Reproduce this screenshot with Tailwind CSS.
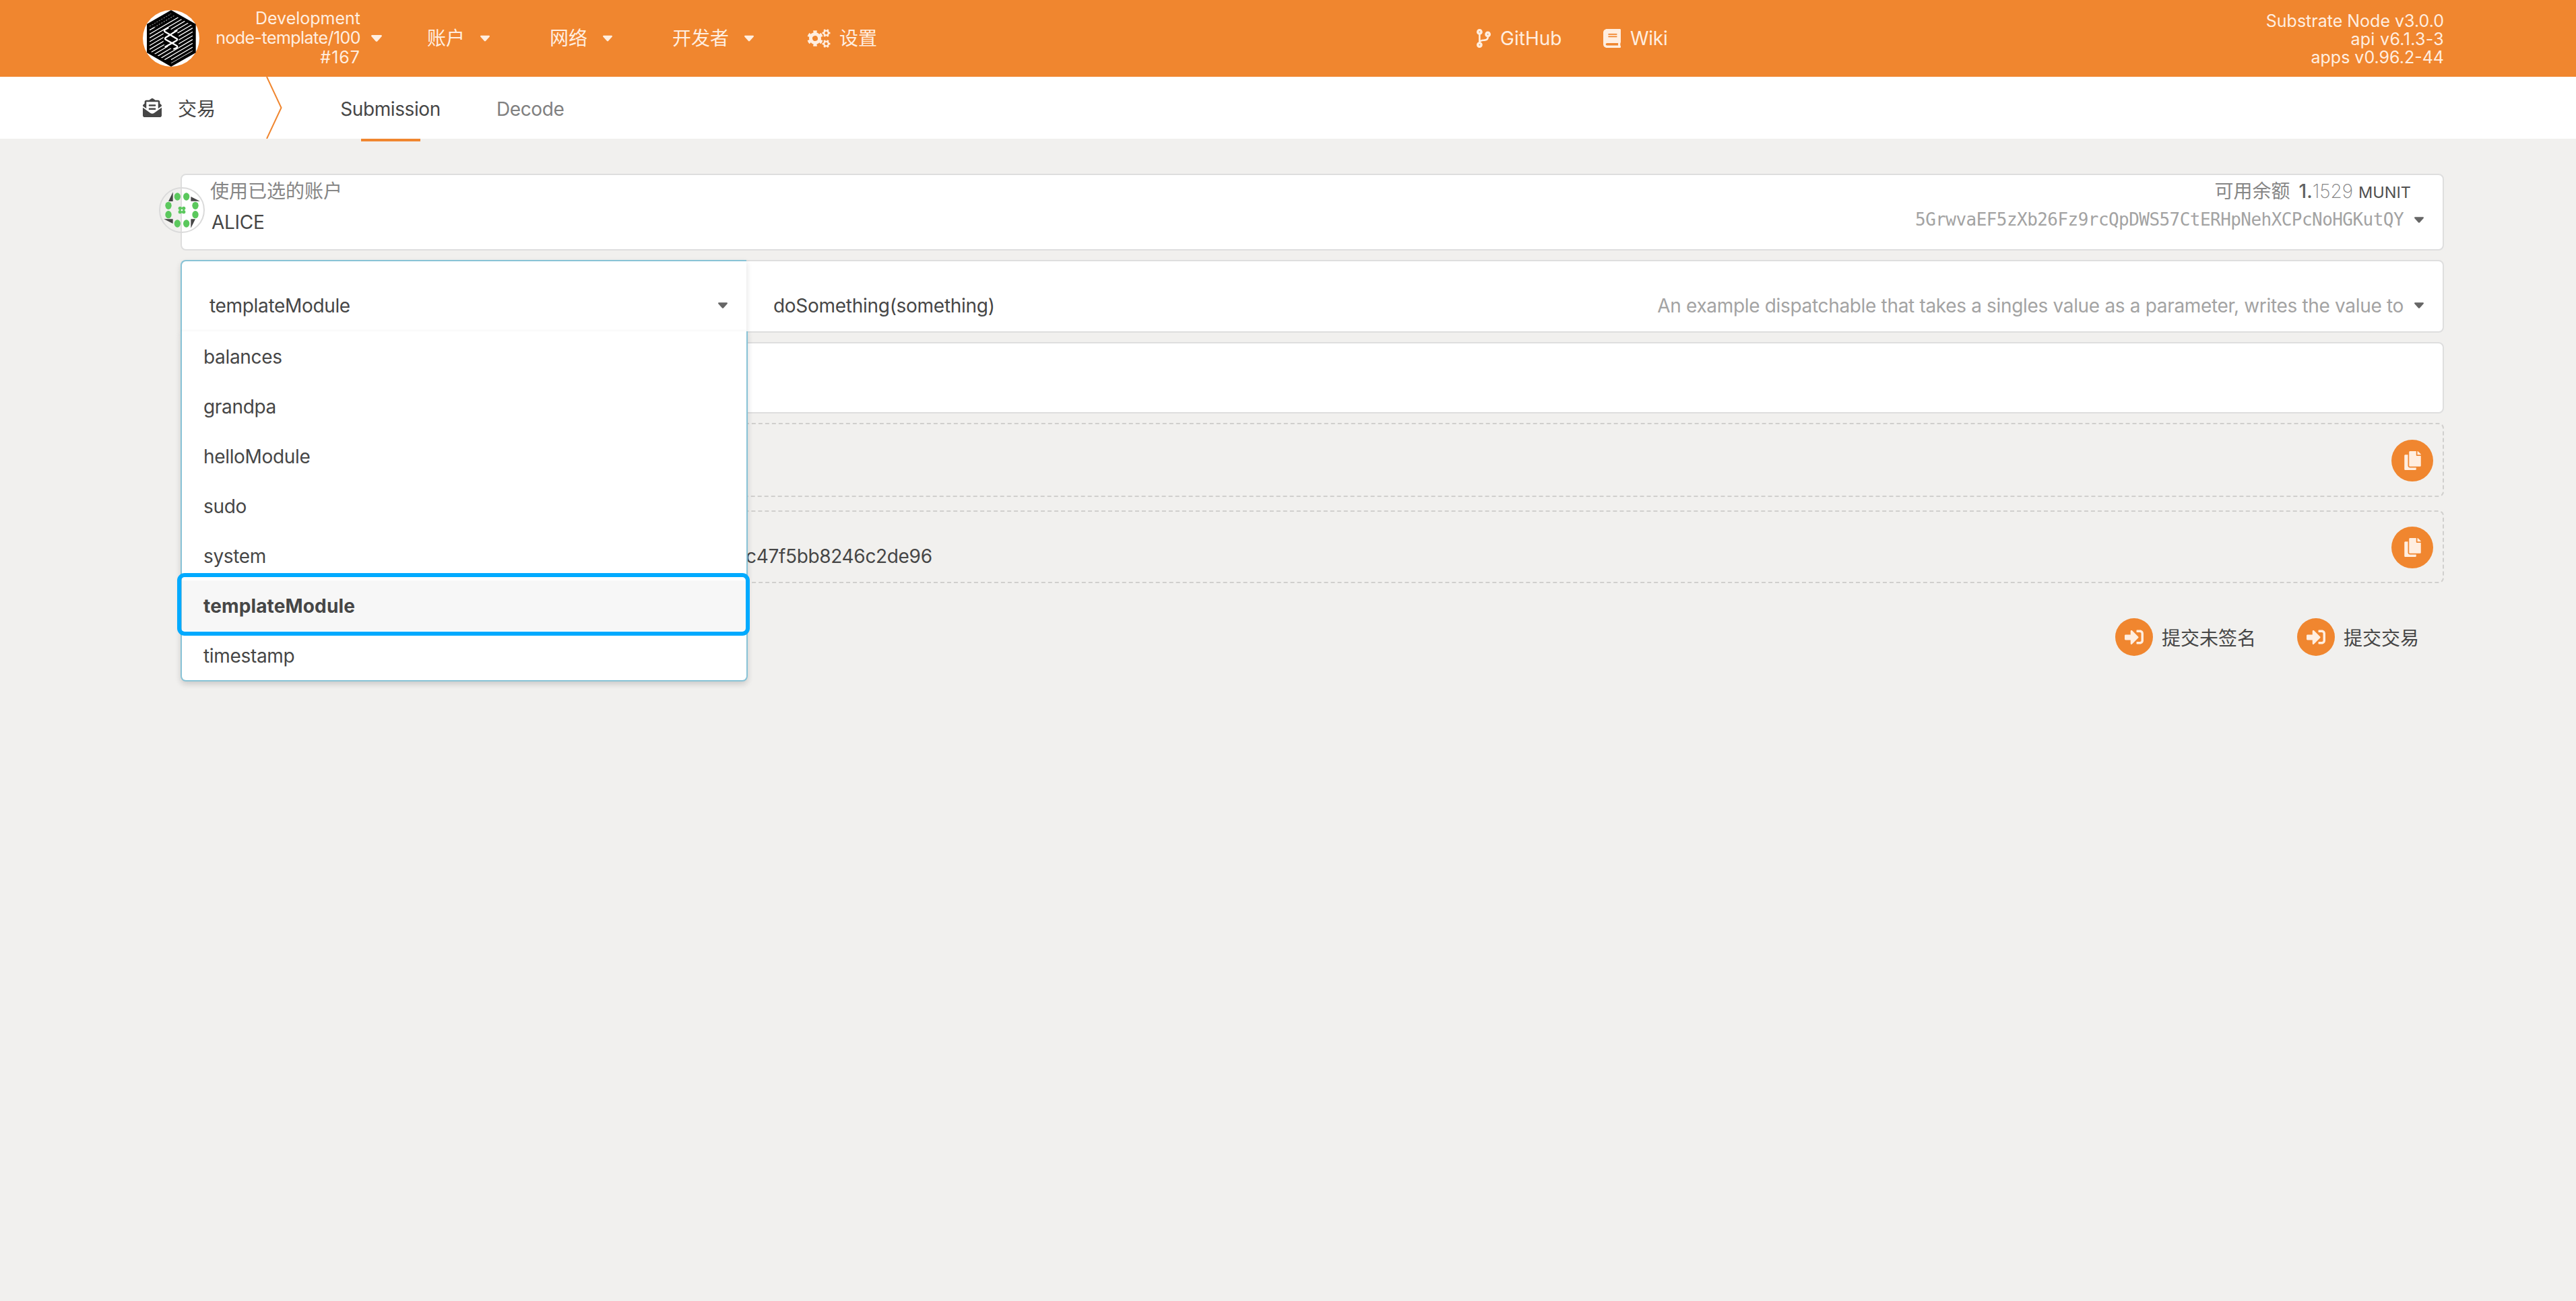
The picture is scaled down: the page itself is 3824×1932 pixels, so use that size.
<!DOCTYPE html>
<html lang="zh">
<head>
  <meta charset="UTF-8" />
  <meta name="viewport" content="width=device-width, initial-scale=1.0"/>
  <title>Polkadot/Substrate Portal</title>
  <script src="https://cdn.jsdelivr.net/npm/@tailwindcss/browser@4"></script>
</head>
<body class="min-h-screen bg-[#f1f0ee] font-['Inter','Noto_Sans_CJK_SC',sans-serif] text-[28px] leading-[40px] text-[#464646]">

  <!-- shared icons -->
  <svg class="hidden">
    <symbol id="caret" viewBox="0 0 16 10"><path d="M1.5 0h13c1.300 0 1.900 1.400 1 2.300L9.300 9.200c-.7.800-1.900.800-2.600 0L.5 2.300C-.4 1.400.2 0 1.500 0z"/></symbol>
    <symbol id="copy" viewBox="0 0 448 512"><path d="M320 448v40c0 13.255-10.745 24-24 24H24c-13.255 0-24-10.745-24-24V120c0-13.255 10.745-24 24-24h72v296c0 30.879 25.121 56 56 56h168zm0-344V0H152c-13.255 0-24 10.745-24 24v368c0 13.255 10.745 24 24 24h272c13.255 0 24-10.745 24-24V128H344c-13.200 0-24-10.800-24-24zm120.971-31.029L375.029 7.029A24 24 0 0 0 358.059 0H352v96h96v-6.059a24 24 0 0 0-7.029-16.970z"/></symbol>
    <symbol id="sign-in" viewBox="0 0 512 512"><path d="M416 448h-84c-6.600 0-12-5.400-12-12v-40c0-6.600 5.400-12 12-12h84c17.700 0 32-14.300 32-32V160c0-17.700-14.300-32-32-32h-84c-6.600 0-12-5.400-12-12V76c0-6.600 5.400-12 12-12h84c53 0 96 43 96 96v192c0 53-43 96-96 96zm-47-201L201 79c-15-15-41-4.500-41 17v96H24c-13.300 0-24 10.700-24 24v96c0 13.300 10.700 24 24 24h136v96c0 21.500 26 32 41 17l168-168c9.300-9.400 9.300-24.600 0-34z"/></symbol>
  </svg>

  <header class="flex h-[114px] items-center bg-[#f0862f] pl-[212px] pr-[196px] text-[#ffeee0]">
    <svg class="size-[84px] shrink-0" viewBox="0 0 252 252">
      <defs>
        <clipPath id="hex"><path d="M126 14 222 70V182L126 238 30 182V70z"/></clipPath>
      </defs>
      <circle cx="126" cy="126" r="126" fill="#fff"/>
      <path d="M126 0 236 62V190L126 252 18 190V62z" fill="#000"/>
      <g clip-path="url(#hex)" stroke="#fff" stroke-width="4">
        <path d="M30 72 126 16M30 89 150 19" stroke="#777" stroke-dasharray="7 5"/>
        <path d="M30 89 52 77M30 107 172 24M30 124 202 24M30 141 222 29M30 158 222 46M30 175 222 63M30 192 222 80M30 209 222 97M30 226 222 114M60 226 222 131M80 231 222 148M126 221 222 165M126 238 222 182"/>
      </g>
      <path d="M92 92 112 78 160 106 160 166 136 176 92 152z" fill="#000"/>
      <path d="M115 78 98 88Q94 92 98 96L152 128Q156 132 150 136L98 165M154 90 102 122Q96 128 102 131L150 158Q158 164 150 168L136 174" fill="none" stroke="#fff" stroke-width="7"/>
    </svg>
    <div class="ml-[20px] flex w-[219px] flex-col items-end pb-[2px] text-[25px] leading-[29px] whitespace-nowrap">
      <span>Development</span><span class="tracking-[-0.55px]">node-template/100</span><span class="tracking-[1px]">#167</span>
    </div>
    <svg class="ml-4 h-[10px] w-4" fill="currentColor"><use href="#caret"/></svg>
    <nav class="flex flex-1 items-center">
      <span class="ml-[67px]">账户</span>
      <svg class="ml-[23px] h-[10px] w-[14px]" fill="currentColor"><use href="#caret"/></svg>
      <span class="ml-[89px]">网络</span>
      <svg class="ml-[23px] h-[10px] w-[14px]" fill="currentColor"><use href="#caret"/></svg>
      <span class="ml-[89px]">开发者</span>
      <svg class="ml-[23px] h-[10px] w-[14px]" fill="currentColor"><use href="#caret"/></svg>
      <svg class="ml-[79px] h-[28px] w-[35px]" viewBox="0 0 35 28" fill="none" stroke="currentColor">
        <g transform="rotate(-105 12 14)">
          <circle cx="12" cy="14" r="6.500" stroke-width="5"/>
          <circle cx="12" cy="14" r="10" stroke-width="3.600" pathLength="60" stroke-dasharray="5 5"/>
        </g>
        <g transform="rotate(-15 28.500 6)">
          <circle cx="28.500" cy="6" r="3.400" stroke-width="2.400"/>
          <circle cx="28.500" cy="6" r="5" stroke-width="2" pathLength="60" stroke-dasharray="5 5"/>
        </g>
        <g transform="rotate(-15 28.500 22)">
          <circle cx="28.500" cy="22" r="3.400" stroke-width="2.400"/>
          <circle cx="28.500" cy="22" r="5" stroke-width="2" pathLength="60" stroke-dasharray="5 5"/>
        </g>
      </svg>
      <span class="ml-[13px]">设置</span>
      <svg class="ml-[890px] h-[28px] w-[21px]" viewBox="0 0 384 512" fill="currentColor"><path d="M384 144c0-44.200-35.800-80-80-80s-80 35.800-80 80c0 36.400 24.300 67.100 57.500 76.800-.6 16.100-4.200 28.500-11 36.900-15.400 19.200-49.300 22.400-85.200 25.700-28.200 2.600-57.400 5.400-81.300 16.900v-144c32.500-10.200 56-40.500 56-76.300 0-44.200-35.800-80-80-80S0 35.800 0 80c0 35.800 23.500 66.100 56 76.300v199.300C23.500 365.900 0 396.200 0 432c0 44.200 35.800 80 80 80s80-35.800 80-80c0-34-21.200-63.100-51.200-74.600 3.100-5.200 7.800-9.800 14.900-13.400 16.200-8.200 40.400-10.400 66.100-12.800 42.200-3.900 90-8.400 118.200-43.400 14-17.400 21.100-39.800 21.600-67.900 31.600-10.800 54.400-40.700 54.400-75.900zM80 64c8.800 0 16 7.200 16 16s-7.200 16-16 16-16-7.200-16-16 7.200-16 16-16zm0 384c-8.800 0-16-7.200-16-16s7.200-16 16-16 16 7.200 16 16-7.200 16-16 16zm224-320c8.800 0 16 7.200 16 16s-7.200 16-16 16-16-7.200-16-16 7.200-16 16-16z"/></svg>
      <span class="ml-[14px] w-[92px]">GitHub</span>
      <svg class="ml-[61px] h-[28px] w-[26px]" viewBox="0 0 448 512" preserveAspectRatio="none" fill="currentColor"><path d="M448 360V24c0-13.300-10.700-24-24-24H96C43 0 0 43 0 96v320c0 53 43 96 96 96h328c13.300 0 24-10.700 24-24v-16c0-7.500-3.500-14.300-8.900-18.700-4.200-15.400-4.200-59.300 0-74.700 5.400-4.300 8.900-11.100 8.900-18.600zM128 134c0-3.300 2.700-6 6-6h212c3.300 0 6 2.700 6 6v20c0 3.300-2.700 6-6 6H134c-3.300 0-6-2.700-6-6v-20zm0 64c0-3.300 2.700-6 6-6h212c3.300 0 6 2.700 6 6v20c0 3.300-2.700 6-6 6H134c-3.300 0-6-2.700-6-6v-20zm253.400 250H96c-17.700 0-32-14.300-32-32 0-17.600 14.400-32 32-32h285.400c-1.900 17.100-1.900 46.900 0 64z"/></svg>
      <span class="ml-[14px] tracking-[-0.3px]">Wiki</span>
    </nav>
    <div class="flex flex-col items-end pt-[2px] text-[25px] leading-[27px]">
      <span>Substrate Node v3.0.0</span><span class="tracking-[0.3px]">api v6.1.3-3</span><span>apps v0.96.2-44</span>
    </div>
  </header>

  <div class="flex h-[92px] items-center bg-white pl-[212px]">
    <svg class="size-[28px]" viewBox="0 0 512 512" fill="currentColor"><path d="M176 216h160c8.840 0 16-7.160 16-16v-16c0-8.840-7.160-16-16-16H176c-8.840 0-16 7.160-16 16v16c0 8.840 7.160 16 16 16zm-16 80c0 8.840 7.160 16 16 16h160c8.840 0 16-7.160 16-16v-16c0-8.840-7.160-16-16-16H176c-8.840 0-16 7.160-16 16v16zm96 121.130c-16.420 0-32.840-5.060-46.860-15.190L0 250.860V464c0 26.510 21.490 48 48 48h416c26.510 0 48-21.490 48-48V250.860L302.860 401.940c-14.020 10.120-30.440 15.190-46.860 15.190zm237.610-254.180c-8.850-6.940-17.240-13.470-29.610-22.810V96c0-26.510-21.490-48-48-48h-77.550c-3.040-2.200-5.870-4.260-9.040-6.560C312.600 29.170 279.200-.35 256 0c-23.200-.35-56.590 29.170-73.410 41.440-3.170 2.300-6 4.360-9.040 6.560H96c-26.510 0-48 21.490-48 48v44.140c-12.370 9.330-20.760 15.870-29.610 22.810A47.995 47.995 0 0 0 0 200.720v10.650l96 69.350V96h320v184.720l96-69.350v-10.650c0-14.740-6.780-28.670-18.390-37.770z"/></svg>
    <span class="ml-6 pt-[3px]">交易</span>
    <svg class="ml-[75px] h-[92px] w-[24px]" viewBox="0 0 24 92" fill="none" stroke="#f0862f" stroke-width="2"><path d="M1 0 22.500 46 1 92"/></svg>
    <div class="relative ml-[86px] flex h-full w-[149px] items-center justify-center pt-1">
      <span class="tracking-[-0.4px]">Submission</span>
      <div class="absolute top-full left-1/2 h-1 w-[88px] -translate-x-1/2 bg-[#f0862f]"></div>
    </div>
    <span class="ml-[83px] pt-1 tracking-[-0.4px] text-[#808080]">Decode</span>
  </div>

  <main class="ml-[268px] w-[3360px] pt-[52px]">
    <!-- account -->
    <section class="relative flex h-[114px] justify-between rounded-lg border-2 border-[#dedede] bg-white">
      <svg class="absolute top-[18px] -left-[34px] size-[68px]" viewBox="48 114 204 204">
        <circle cx="150" cy="216" r="99" fill="none" stroke="#dadada" stroke-width="6"/>
        <g fill="#5bc85d">
          <ellipse cx="130" cy="156" rx="14" ry="17"/><ellipse cx="170" cy="156" rx="14" ry="17"/>
          <ellipse cx="90" cy="196" rx="14" ry="17"/><ellipse cx="210" cy="196" rx="14" ry="17"/>
          <ellipse cx="90" cy="236" rx="14" ry="17"/><ellipse cx="210" cy="236" rx="14" ry="17"/>
          <ellipse cx="130" cy="276" rx="14" ry="17"/><ellipse cx="170" cy="276" rx="14" ry="17"/>
          <circle cx="142" cy="208" r="8"/><circle cx="158" cy="208" r="8"/>
          <circle cx="142" cy="224" r="8"/><circle cx="158" cy="224" r="8"/>
          <path d="M140 206h20v20h-20z"/>
        </g>
        <path d="M150 211 155 216 150 221 145 216z" fill="#fff"/>
        <path d="M110 136V177H90zM190 156 230 176H190zM70 256H110V276zM190 256H210L190 296z" fill="#464646"/>
      </svg>
      <div class="flex flex-col pt-[4px] pl-[42px]">
        <span class="text-[#868686]">使用已选的账户</span>
        <span class="mt-[6px] ml-[2px] tracking-[-0.3px]">ALICE</span>
      </div>
      <div class="flex flex-col items-end pt-[4px] pr-[28px]">
        <div class="flex items-baseline pr-[19px] text-[#868686]">
          <span>可用余额</span>
          <span class="ml-[13px] font-medium text-[#606060]">1.</span><span class="font-extralight">1529</span>
          <span class="ml-2 text-[23.5px] text-[#505050]">MUNIT</span>
        </div>
        <div class="flex items-center">
          <span class="font-['DejaVu_Sans_Mono',monospace] text-[26px] tracking-[-0.55px] text-[#a3a3a3]">5GrwvaEF5zXb26Fz9rcQpDWS57CtERHpNehXCPcNoHGKutQY</span>
          <svg class="ml-4 h-[9px] w-[14px] fill-[#666]"><use href="#caret"/></svg>
        </div>
      </div>
    </section>

    <!-- extrinsic -->
    <section class="relative mt-[14px] flex h-[108px] rounded-lg border-2 border-[#dedede] bg-white tracking-[-0.33px]">
      <div class="absolute -top-[2px] -left-[2px] z-10 w-[842px]">
        <div class="flex h-[106px] w-[840px] items-center justify-between rounded-tl-lg border-t-2 border-l-2 border-[#88c3d6] bg-white pt-[28px] pr-[28px] pl-[41px] shadow-[0_4px_8px_rgba(34,36,38,0.15)]">
          <span>templateModule</span>
          <svg class="mb-[2px] h-[9px] w-[14px] fill-[#666]"><use href="#caret"/></svg>
        </div>
        <ul class="relative rounded-b-lg border-x-2 border-b-2 border-[#88c3d6] bg-white shadow-[0_4px_8px_rgba(34,36,38,0.18)]">
          <li class="flex h-[74px] items-center px-8 pt-[2px]">balances</li>
          <li class="flex h-[74px] items-center px-8 pt-[2px]">grandpa</li>
          <li class="flex h-[74px] items-center px-8 pt-[2px]">helloModule</li>
          <li class="flex h-[74px] items-center px-8 pt-[2px]">sudo</li>
          <li class="flex h-[74px] items-center px-8 pt-[2px]">system</li>
          <li class="relative flex h-[74px] items-center bg-[#f7f7f7] px-8 pt-[2px] font-bold tracking-[0.15px]">
            <span>templateModule</span>
            <div class="absolute -top-[11px] -left-[7px] h-[93px] w-[850px] rounded-[11px] border-[6px] border-[#00aaff]"></div>
          </li>
          <li class="flex h-[74px] items-center px-8 pt-[2px]">timestamp</li>
        </ul>
      </div>
      <div class="flex flex-1 items-center justify-between pt-[28px] pr-[28px] pl-[878px]">
        <span class="tracking-[-0.28px]">doSomething(something)</span>
        <div class="flex items-center">
          <span class="text-[#a3a3a3]">An example dispatchable that takes a singles value as a parameter, writes the value to</span>
          <svg class="mb-[2px] ml-4 h-[9px] w-[14px] fill-[#666]"><use href="#caret"/></svg>
        </div>
      </div>
    </section>

    <!-- parameter -->
    <section class="mt-[14px] h-[106px] rounded-lg border-2 border-[#dedede] bg-white"></section>

    <!-- encoded call data / hash -->
    <section class="mt-[14px] flex h-[110px] items-center justify-end rounded-lg border-2 border-dashed border-[#d0cfcd] pt-[2px] pr-[14px]">
      <button class="flex size-[62px] items-center justify-center rounded-full bg-[#f0862f] text-[#ffeee0]">
        <svg class="h-[28px] w-[25px]" fill="currentColor"><use href="#copy"/></svg>
      </button>
    </section>
    <section class="mt-5 flex h-[108px] items-center justify-between rounded-lg border-2 border-dashed border-[#d0cfcd] pt-[2px] pr-[14px] pl-[837px]">
      <span class="pt-[26px] tracking-[-0.33px]">c47f5bb8246c2de96</span>
      <button class="flex size-[62px] items-center justify-center rounded-full bg-[#f0862f] text-[#ffeee0]">
        <svg class="h-[28px] w-[25px]" fill="currentColor"><use href="#copy"/></svg>
      </button>
    </section>

    <div class="mt-[52px] flex justify-end pr-[37px]">
      <button class="flex items-center">
        <span class="flex size-[56px] items-center justify-center rounded-full bg-[#f0862f] text-[#ffeee0]"><svg class="size-[28px]" fill="currentColor"><use href="#sign-in"/></svg></span>
        <span class="ml-[13px] pt-[3px]">提交未签名</span>
      </button>
      <button class="ml-[61px] flex items-center">
        <span class="flex size-[56px] items-center justify-center rounded-full bg-[#f0862f] text-[#ffeee0]"><svg class="size-[28px]" fill="currentColor"><use href="#sign-in"/></svg></span>
        <span class="ml-[13px] pt-[3px]">提交交易</span>
      </button>
    </div>
  </main>
</body>
</html>
